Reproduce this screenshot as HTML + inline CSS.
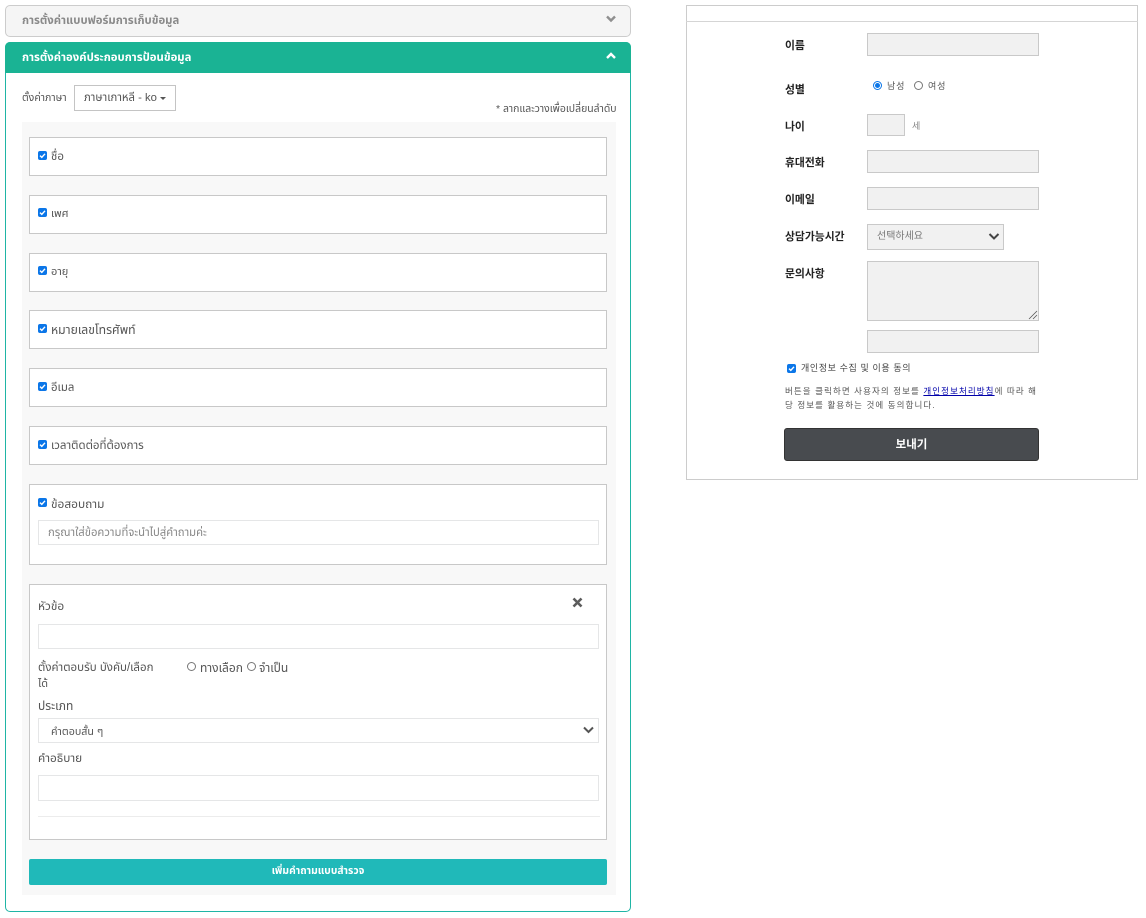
<!DOCTYPE html>
<html lang="th"><head><meta charset="utf-8"><title>Form</title>
<style>
html,body{margin:0;padding:0;background:#fff}
body{width:1146px;height:918px;position:relative;overflow:hidden;font-family:"Liberation Sans","Noto Sans Thai","Noto Sans CJK KR",sans-serif;font-size:11px;color:#555}
.a{position:absolute;box-sizing:border-box}
.t{position:absolute;white-space:nowrap;line-height:14px}
.item{position:absolute;left:29px;width:578px;background:#fff;border:1px solid #c8c8c8;box-sizing:border-box}
.cb{position:absolute;left:38px;width:9px;height:9px;background:#0b76e8;border-radius:2px}
.cb svg{position:absolute;left:0;top:0}
.inp{position:absolute;left:38px;width:561px;background:#fff;border:1px solid #e5e6e7;box-sizing:border-box}
.f{position:absolute;left:867px;width:172px;background:#f1f1f1;border:1px solid #c9c9c9;box-sizing:border-box}
.l{position:absolute;left:785px;font-size:10.8px;font-weight:bold;color:#222;line-height:14px;white-space:nowrap;font-family:"Liberation Sans","Noto Sans CJK KR",sans-serif}
.k{font-family:"Liberation Sans","Noto Sans CJK KR",sans-serif;font-size:9px;color:#555;letter-spacing:.9px;position:absolute;white-space:nowrap;line-height:14px}
.r{position:absolute;width:9px;height:9px;border:1px solid #777;border-radius:50%;box-sizing:border-box;background:#fff}
</style></head><body>

<div class="a" style="left:5px;top:5px;width:626px;height:32px;background:#f5f5f5;border:1px solid #ccc;border-radius:5px"></div>
<div class="t" style="left:22px;top:14px;font-size:11.35px;font-weight:bold;color:#8a8a8a">การตั้งค่าแบบฟอร์มการเก็บข้อมูล</div>
<svg class="a" style="left:605px;top:14px" width="12" height="10" viewBox="0 0 12 10"><path d="M2 2.5 6 6.5 10 2.5" fill="none" stroke="#8f8f8f" stroke-width="2.4"/></svg>

<div class="a" style="left:5px;top:42px;width:626px;height:870px;background:#fff;border:1px solid #1fb5a5;border-radius:5px"></div>
<div class="a" style="left:5px;top:42px;width:626px;height:31px;background:#1ab394;border-radius:5px 5px 0 0"></div>
<div class="t" style="left:22px;top:51px;font-size:11.35px;font-weight:bold;color:#fff">การตั้งค่าองค์ประกอบการป้อนข้อมูล</div>
<svg class="a" style="left:605px;top:51px" width="12" height="10" viewBox="0 0 12 10"><path d="M2 7 6 3 10 7" fill="none" stroke="#fff" stroke-width="2.4"/></svg>

<div class="t" style="left:22px;top:91px;font-size:10.5px">ตั้งค่าภาษา</div>
<div class="a" style="left:74px;top:85px;width:102px;height:26px;border:1px solid #c4c4c4;background:#fff"></div>
<div class="t" style="left:84px;top:91px;font-size:11.3px">ภาษาเกาหลี - ko</div>
<div class="a" style="left:160px;top:97px;width:0;height:0;border:3px solid transparent;border-top-color:#555;border-bottom:0"></div>
<div class="t" style="left:496px;top:103px;font-size:10.45px">* ลากและวางเพื่อเปลี่ยนลำดับ</div>

<div class="a" style="left:22px;top:122px;width:594px;height:773px;background:#f8f8f8"></div>

<div class="item" style="top:137px;height:39px"></div>
<div class="cb" style="top:151px"><svg width="9" height="9"><path d="M2 4.6 3.8 6.4 7 2.8" fill="none" stroke="#fff" stroke-width="1.4"/></svg></div>
<div class="t" style="left:51px;top:150px;font-size:11.5px">ชื่อ</div>

<div class="item" style="top:195px;height:39px"></div>
<div class="cb" style="top:208px"><svg width="9" height="9"><path d="M2 4.6 3.8 6.4 7 2.8" fill="none" stroke="#fff" stroke-width="1.4"/></svg></div>
<div class="t" style="left:51px;top:207px">เพศ</div>

<div class="item" style="top:253px;height:39px"></div>
<div class="cb" style="top:266px"><svg width="9" height="9"><path d="M2 4.6 3.8 6.4 7 2.8" fill="none" stroke="#fff" stroke-width="1.4"/></svg></div>
<div class="t" style="left:51px;top:265px">อายุ</div>

<div class="item" style="top:310px;height:39px"></div>
<div class="cb" style="top:324px"><svg width="9" height="9"><path d="M2 4.6 3.8 6.4 7 2.8" fill="none" stroke="#fff" stroke-width="1.4"/></svg></div>
<div class="t" style="left:51px;top:323px;font-size:12.2px">หมายเลขโทรศัพท์</div>

<div class="item" style="top:368px;height:39px"></div>
<div class="cb" style="top:382px"><svg width="9" height="9"><path d="M2 4.6 3.8 6.4 7 2.8" fill="none" stroke="#fff" stroke-width="1.4"/></svg></div>
<div class="t" style="left:51px;top:381px;font-size:11.4px">อีเมล</div>

<div class="item" style="top:426px;height:39px"></div>
<div class="cb" style="top:440px"><svg width="9" height="9"><path d="M2 4.6 3.8 6.4 7 2.8" fill="none" stroke="#fff" stroke-width="1.4"/></svg></div>
<div class="t" style="left:51px;top:439px;font-size:11.5px">เวลาติดต่อที่ต้องการ</div>

<div class="item" style="top:484px;height:81px"></div>
<div class="cb" style="top:498px"><svg width="9" height="9"><path d="M2 4.6 3.8 6.4 7 2.8" fill="none" stroke="#fff" stroke-width="1.4"/></svg></div>
<div class="t" style="left:51px;top:497px;font-size:11.9px">ข้อสอบถาม</div>
<div class="inp" style="top:520px;height:25px"></div>
<div class="t" style="left:48px;top:526px;font-size:11.3px;color:#888">กรุณาใส่ข้อความที่จะนำไปสู่คำถามค่ะ</div>

<div class="item" style="top:584px;height:256px"></div>
<div class="t" style="left:38px;top:599px;font-size:11.9px">หัวข้อ</div>
<svg class="a" style="left:571px;top:596px" width="13" height="13" viewBox="0 0 13 13"><path d="M2.500 2.500 10.500 10.500M10.500 2.500 2.500 10.500" stroke="#5c5c5c" stroke-width="2.600"/></svg>
<div class="inp" style="top:624px;height:25px"></div>
<div class="t" style="left:38px;top:661px;font-size:11.5px">ตั้งค่าตอบรับ บังคับ/เลือก</div>
<div class="t" style="left:38px;top:677px">ได้</div>
<div class="r" style="left:187px;top:662px"></div>
<div class="t" style="left:200px;top:661px;font-size:12px">ทางเลือก</div>
<div class="r" style="left:247px;top:662px"></div>
<div class="t" style="left:259px;top:661px;font-size:12px">จำเป็น</div>
<div class="t" style="left:38px;top:699px;font-size:12px">ประเภท</div>
<div class="inp" style="top:718px;height:25px"></div>
<div class="t" style="left:51px;top:725px;font-size:10.7px">คำตอบสั้น ๆ</div>
<svg class="a" style="left:582px;top:725px" width="13" height="10" viewBox="0 0 13 10"><path d="M2 2.500 6.500 7 11 2.500" fill="none" stroke="#555" stroke-width="2"/></svg>
<div class="t" style="left:38px;top:751px;font-size:11.8px">คำอธิบาย</div>
<div class="inp" style="top:775px;height:26px"></div>
<div class="a" style="left:38px;top:816px;width:562px;height:1px;background:#ececec"></div>

<div class="a" style="left:29px;top:859px;width:578px;height:26px;background:#20b9b9;border-radius:2px"></div>
<div class="t" style="left:29px;width:578px;top:865px;text-align:center;font-size:10.3px;font-weight:bold;color:#fff">เพิ่มคำถามแบบสำรวจ</div>

<!-- right -->
<div class="a" style="left:686px;top:5px;width:452px;height:475px;background:#fff;border:1px solid #ccc"></div>
<div class="a" style="left:686px;top:21px;width:452px;height:1px;background:#d5d5d5"></div>

<div class="l" style="top:39px">이름</div>
<div class="f" style="top:33px;height:23px"></div>
<div class="l" style="top:83px">성별</div>
<div class="a" style="left:873px;top:81px;width:9px;height:9px;border:1px solid #0b76e8;border-radius:50%;background:#fff"></div>
<div class="a" style="left:875px;top:83px;width:5px;height:5px;border-radius:50%;background:#0b76e8"></div>
<div class="k" style="left:887px;top:79px">남성</div>
<div class="r" style="left:914px;top:81px"></div>
<div class="k" style="left:928px;top:79px">여성</div>
<div class="l" style="top:120px">나이</div>
<div class="f" style="top:114px;width:38px;height:22px"></div>
<div class="k" style="left:912px;top:119px;color:#888">세</div>
<div class="l" style="top:156px">휴대전화</div>
<div class="f" style="top:150px;height:23px"></div>
<div class="l" style="top:193px">이메일</div>
<div class="f" style="top:187px;height:23px"></div>
<div class="l" style="top:230px">상담가능시간</div>
<div class="f" style="top:224px;width:137px;height:26px"></div>
<div class="k" style="left:877px;top:230px;font-size:10px;letter-spacing:0;color:#777">선택하세요</div>
<svg class="a" style="left:987px;top:231px" width="14" height="11" viewBox="0 0 14 11"><path d="M2.500 3 7 7.500 11.500 3" fill="none" stroke="#444" stroke-width="2"/></svg>
<div class="l" style="top:267px">문의사항</div>
<div class="f" style="top:261px;height:60px"></div>
<svg class="a" style="left:1028px;top:310px" width="10" height="10" viewBox="0 0 10 10"><path d="M1 9 9 1M5 9 9 5" stroke="#555" stroke-width=".8"/></svg>
<div class="f" style="top:330px;height:23px"></div>

<div class="a" style="left:787px;top:364px;width:9px;height:9px;background:#0b76e8;border-radius:2px"><svg style="position:absolute;left:0;top:0" width="9" height="9"><path d="M2 4.600 3.800 6.400 7 2.800" fill="none" stroke="#fff" stroke-width="1.400"/></svg></div>
<div class="k" style="left:801px;top:361px;color:#444;letter-spacing:.6px">개인정보 수집 및 이용 동의</div>
<div class="k" style="left:785px;top:384px;font-size:8.500px;letter-spacing:1.08px">버튼을 클릭하면 사용자의 정보를 <span style="color:#00a;text-decoration:underline">개인정보처리방침</span>에 따라 해</div>
<div class="k" style="left:785px;top:398px;font-size:8.500px;letter-spacing:1.08px">당 정보를 활용하는 것에 동의합니다.</div>

<div class="a" style="left:784px;top:428px;width:255px;height:33px;background:#484b4f;border:1px solid #333;border-radius:3px"></div>
<div class="t" style="left:784px;width:255px;top:438px;text-align:center;font-weight:bold;color:#fff;font-family:'Liberation Sans','Noto Sans CJK KR',sans-serif;font-size:11.500px">보내기</div>

</body></html>
